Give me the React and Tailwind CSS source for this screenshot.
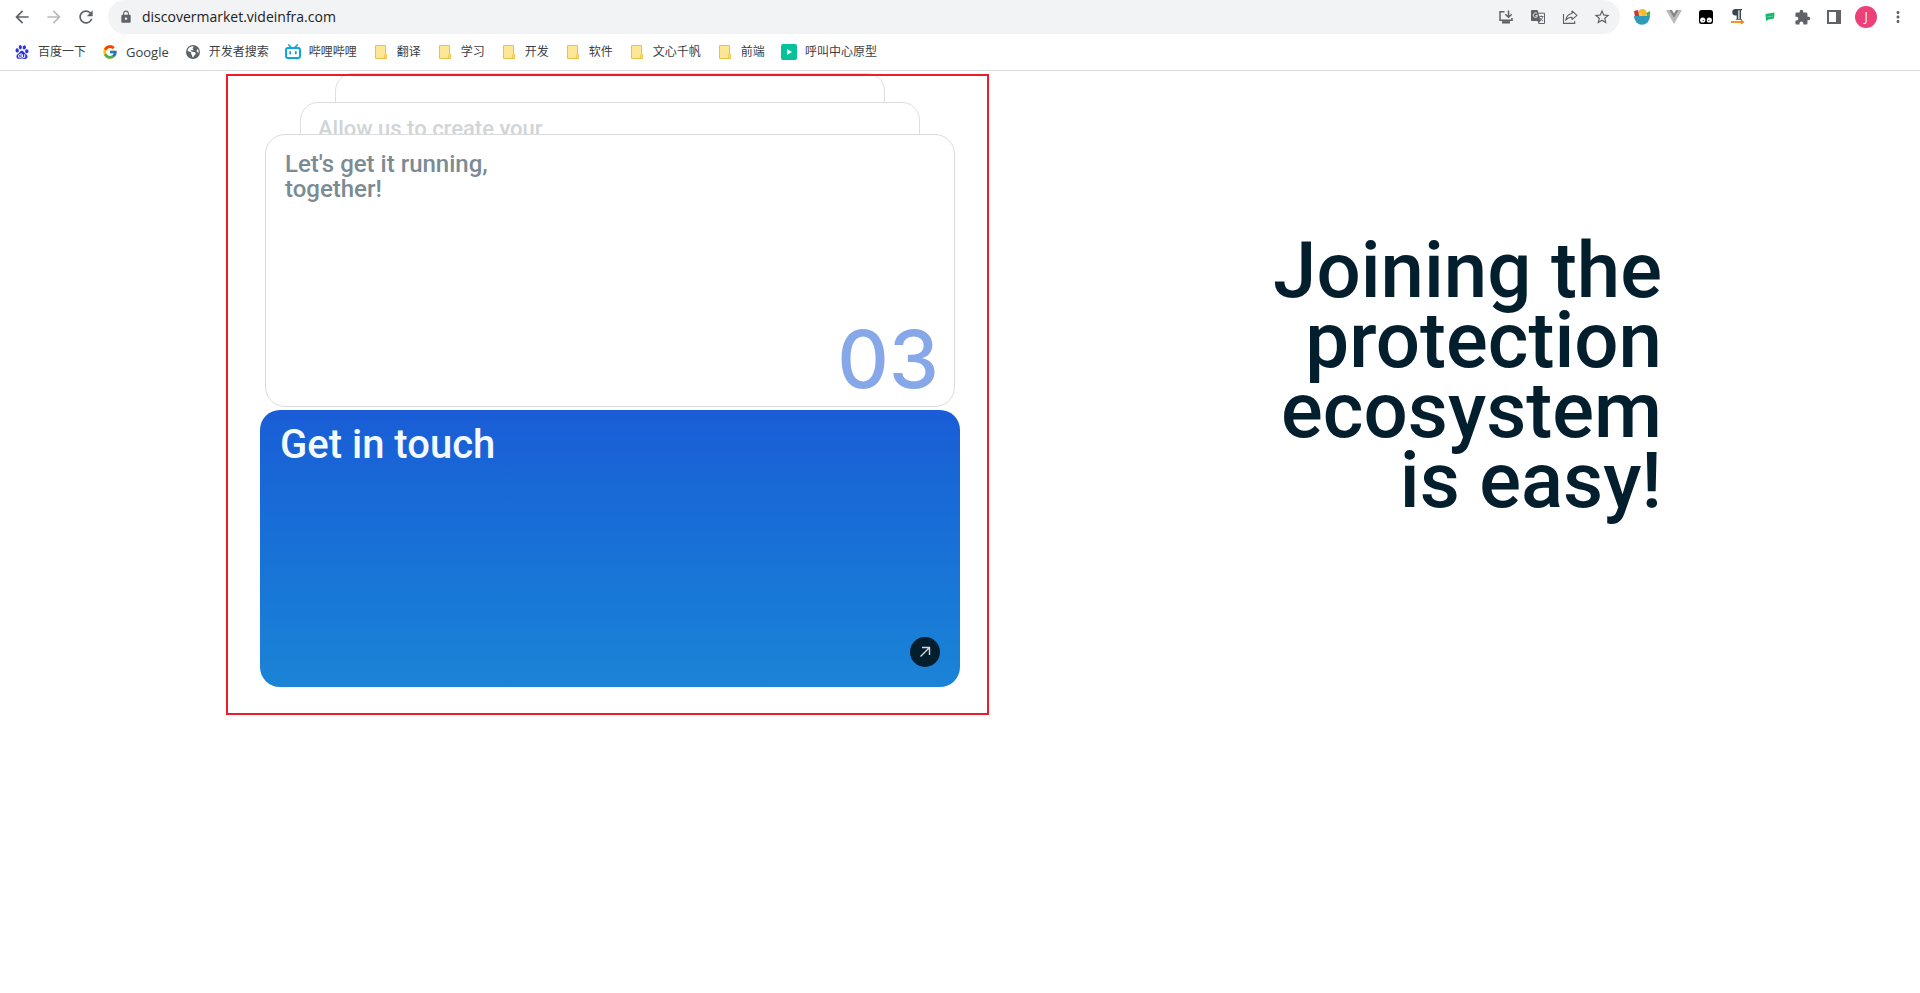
import React from "react";
import { MdArrowBack, MdArrowForward, MdRefresh, MdLock, MdExtension, MdStarBorder, MdMoreVert } from "react-icons/md";
import { FcGoogle } from "react-icons/fc";
import { SiBaidu } from "react-icons/si";
import { FaEarthAmericas } from "react-icons/fa6";

const InstallIcon = () => (
  <svg width="16" height="16" viewBox="0 0 16 16" fill="none" stroke="#5f6368" strokeWidth="1.5">
    <path d="M6.5 2.7H2v8.6h12V9" />
    <path d="M10.5 1.5v6M7.3 5.2l3.2 3.1 3.2-3.1" />
    <path d="M4 13.3h8" strokeWidth="2.4" />
  </svg>
);

const TranslateIcon = () => (
  <svg width="16" height="16" viewBox="0 0 16 16" fill="none">
    <path d="M7 4.2h7.5v10.3H8.5" stroke="#5f6368" strokeWidth="1" />
    <path d="M9.3 7.5h4.2M11.4 6.5v1M12.8 7.5c-.5 2-1.6 3.4-3 4.4M10 9c.7 1.200 1.700 2.300 3 3" stroke="#5f6368" strokeWidth=".9" />
    <path d="M1.800 1h5.700l3.300 11H1.800a.8.8 0 0 1-.8-.8V1.800A.8.8 0 0 1 1.800 1z" fill="#5f6368" />
    <path d="M7.300 4.900A2.200 2.200 0 1 0 7.600 6.700H5.500" stroke="#f1f3f4" strokeWidth="1" />
    <path d="M7.500 12h3l-2 2.500z" fill="#5f6368" />
  </svg>
);

const ShareIcon = () => (
  <svg width="16" height="16" viewBox="0 0 16 16" fill="none" stroke="#5f6368" strokeWidth="1.1">
    <path d="M1.500 5v9.400h11.200v-2.400" />
    <path d="M10 2l5 4.400-5 4.300V8.200C7.200 8.100 5.300 9 3.700 11.200 4.300 7.500 6.500 5 10 4.500z" strokeLinejoin="round" />
  </svg>
);

const BowlIcon = () => (
  <svg width="16" height="16" viewBox="0 0 16 16">
    <path d="M0 2l4-1 2 7H1z" fill="#c9343f" />
    <path d="M12 4l4-2v5l-3 1z" fill="#49b748" />
    <circle cx="8.500" cy="4" r="4" fill="#fbb829" />
    <circle cx="6.500" cy="5" r="1.600" fill="#ffd65a" />
    <path d="M0 7h16a8 8.700 0 0 1-16 0z" fill="#2f9ab9" />
  </svg>
);

const VueIcon = () => (
  <svg width="16" height="14" viewBox="0 0 16 14">
    <path d="M0 0h3.200L8 8.300 12.800 0H16L8 14z" fill="#b9b9b9" />
    <path d="M3.200 0H6l2 3.500L10 0h2.800L8 8.300z" fill="#858585" />
  </svg>
);

const MonkeyIcon = () => (
  <svg width="14" height="14" viewBox="0 0 14 14">
    <rect width="14" height="14" rx="2.500" fill="#000" />
    <circle cx="3.700" cy="10" r="2.600" fill="#fff" />
    <circle cx="10.300" cy="10" r="2.600" fill="#fff" />
    <circle cx="4.200" cy="10.500" r=".6" fill="#000" />
    <circle cx="9.800" cy="10.500" r=".6" fill="#000" />
  </svg>
);

const PilcrowIcon = () => (
  <svg width="14" height="16" viewBox="0 0 14 16">
    <path d="M4.500 0H11v1.300h-1V10h1v.8H7.800V10h.7V1.300H7.300V10H8v.8H4.800V10h.9V6.500H4.500a3.250 3.250 0 0 1 0-6.500z" fill="#37474f" />
    <path d="M0 13h11" stroke="#f5820b" strokeWidth="1.700" />
    <path d="M9.800 10.200l3.800 2.800-3.800 2.800z" fill="#f5820b" />
  </svg>
);

const FlagIcon = () => (
  <svg width="10" height="10" viewBox="0 0 10 10">
    <path d="M.5 2L9.500.5 9 6.500 3.500 7.500 1 9z" fill="#12b76a" />
    <path d="M2.500 4.800h1M4.500 4.500h1M6.500 4.200h1" stroke="#c5f2dc" strokeWidth=".9" />
  </svg>
);

const PanelIcon = () => (
  <svg width="14" height="14" viewBox="0 0 14 14">
    <path fillRule="evenodd" d="M0 0h14v14H0zM2 2v10h7V2z" fill="#5f6368" />
  </svg>
);

const BiliIcon = () => (
  <svg width="18" height="16" viewBox="0 0 18 16" fill="none" stroke="#10a5dc" strokeLinecap="round">
    <path d="M4.800 1l2 2M13.200 1l-2 2" strokeWidth="1.700" />
    <rect x="2" y="4" width="14" height="10" rx="2" strokeWidth="2" />
    <path d="M6.200 8v1.500M11.800 8v1.500" strokeWidth="1.800" />
    <path d="M5 15h.5M12.500 15h.5" strokeWidth="1" />
  </svg>
);

const FolderIcon = () => (
  <svg width="16" height="16" viewBox="0 0 16 16">
    <path d="M2.500 1.500h10v9h1v4h-11z" fill="#ffe694" stroke="#e9c349" />
    <path d="M11.500 14v-2.500a1 1 0 0 1 2 0v2a1 1 0 0 1-2 0z" fill="#ffe694" stroke="#e9c349" />
  </svg>
);

const PlayIcon = () => (
  <svg width="16" height="16" viewBox="0 0 16 16">
    <rect width="16" height="16" rx="2" fill="#06c298" />
    <path d="M6 5l5 3-5 3z" fill="#fff" />
  </svg>
);

const bookmarks = [
  ["百度一下", <SiBaidu size={14} color="#2932e1" />],
  ["Google", <FcGoogle size={16} />],
  ["开发者搜索", <FaEarthAmericas size={14} color="#5f6368" />],
  ["哔哩哔哩", <BiliIcon />],
  ["翻译", <FolderIcon />],
  ["学习", <FolderIcon />],
  ["开发", <FolderIcon />],
  ["软件", <FolderIcon />],
  ["文心千帆", <FolderIcon />],
  ["前端", <FolderIcon />],
  ["呼叫中心原型", <PlayIcon />],
];

const addressActions = [
  ["Install app", <InstallIcon />],
  ["Translate page", <TranslateIcon />],
  ["Share page", <ShareIcon />],
  ["Bookmark page", <MdStarBorder size={18} />],
];

const extensions = [
  ["Fruit bowl", <BowlIcon />],
  ["Vue devtools", <VueIcon />],
  ["User scripts", <MonkeyIcon />],
  ["Paragraph translator", <PilcrowIcon />],
  ["Chat flag", <FlagIcon />],
  ["Extensions", <MdExtension size={17} />],
  ["Side panel", <PanelIcon />],
];

function IconButton({ label, children }) {
  return (
    <button type="button" aria-label={label} className="flex h-8 w-8 shrink-0 items-center justify-center text-[#5f6368]">
      {children}
    </button>
  );
}

function BrowserBar() {
  return (
    <header className="border-b border-[#dadce0] bg-white font-['Open_Sans','Noto_Sans_CJK_SC',sans-serif]">
      <div className="flex h-[34px] items-center gap-1.5 px-1.5">
        <div className="flex">
          <IconButton label="Back"><MdArrowBack size={20} /></IconButton>
          <IconButton label="Forward"><MdArrowForward size={20} color="#babcbe" /></IconButton>
          <IconButton label="Reload"><MdRefresh size={20} /></IconButton>
        </div>
        <div className="flex h-full min-w-0 flex-1 items-center rounded-full bg-[#f1f3f4] pr-0.5 pl-[11px]">
          <MdLock size={14} color="#5f6368" className="shrink-0" />
          <input
            type="text"
            aria-label="Address"
            defaultValue="discovermarket.videinfra.com"
            className="ml-[9px] min-w-0 flex-1 bg-transparent text-sm text-[#202124] outline-none"
          />
          {addressActions.map(([label, icon]) => (
            <IconButton key={label} label={label}>{icon}</IconButton>
          ))}
        </div>
        <div className="flex">
          {extensions.map(([label, icon]) => (
            <IconButton key={label} label={label}>{icon}</IconButton>
          ))}
          <IconButton label="Profile">
            <span className="flex h-[22px] w-[22px] items-center justify-center rounded-full bg-[#ec407a] text-xs text-white">J</span>
          </IconButton>
          <IconButton label="Menu"><MdMoreVert size={18} /></IconButton>
        </div>
      </div>
      <nav aria-label="Bookmarks" className="flex h-9 items-center gap-4 px-3.5">
        {bookmarks.map(([name, icon]) => (
          <a
            key={name}
            href="#"
            className={`flex items-center gap-2 leading-4 whitespace-nowrap text-[#3c4043] ${/^\w+$/.test(name) ? "text-[13px]" : "text-[12px]"}`}
          >
            <span className="flex h-4 w-4 shrink-0 items-center justify-center [&>svg]:shrink-0">{icon}</span>
            {name}
          </a>
        ))}
      </nav>
    </header>
  );
}

function CardStack() {
  return (
    <section className="relative col-start-2 mt-0.5 pr-[29px] pb-7 pl-[34px]">
      <div className="mx-[75px] h-[60px] rounded-[18px] border border-[#dedede] bg-white" />
      <article className="relative mx-10 -mt-[31px] h-[60px] overflow-hidden rounded-[18px] border border-[#dedede] bg-white px-[17px] pt-[13px]">
        <h2 className="text-[22px] leading-[25px] font-medium text-[#d0d5d8]">Allow us to create your</h2>
      </article>
      <article className="relative mx-[5px] -mt-7 flex h-[273px] flex-col justify-between rounded-[20px] border border-[#dcdcdc] bg-white pt-[17px] pr-[15px] pb-3 pl-[19px]">
        <h2 className="text-2xl leading-[25px] font-medium text-[#7b8b94]">Let's get it running,<br />together!</h2>
        <p className="text-right font-['Inter',sans-serif] text-[80px] leading-[70px] font-medium text-[#86a8e8]">03</p>
      </article>
      <article className="mt-[3px] flex h-[277px] flex-col justify-between rounded-[20px] bg-linear-to-b from-[#1a5dd6] to-[#1b84d6] p-5 pt-[15px]">
        <h2 className="text-[40px] leading-10 font-medium text-[#f3fafe]">Get in touch</h2>
        <a href="#" aria-label="Get in touch" className="flex h-[30px] w-[30px] items-center justify-center self-end rounded-full bg-[#031e2d]">
          <svg width="12" height="12" viewBox="0 0 12 12" fill="none" stroke="#d5dade" strokeWidth="1.400">
            <path d="M1.500 10.500L10.500 1.500M3 1.500h7.500V9" />
          </svg>
        </a>
      </article>
      <div className="pointer-events-none absolute inset-x-0 top-px bottom-0 border-2 border-[#ee1c25]" />
    </section>
  );
}

export default function App() {
  return (
    <div className="min-h-screen bg-white">
      <BrowserBar />
      <main className="grid grid-cols-[226fr_763fr_673fr_258fr] items-start font-['Roboto','Liberation_Sans',sans-serif]">
        <CardStack />
        <h1 className="col-start-3 mt-[165px] text-right text-[78px] leading-[70px] font-medium text-[#031e2d]">
          Joining the<br />protection<br />ecosystem<br />is easy!
        </h1>
      </main>
    </div>
  );
}
